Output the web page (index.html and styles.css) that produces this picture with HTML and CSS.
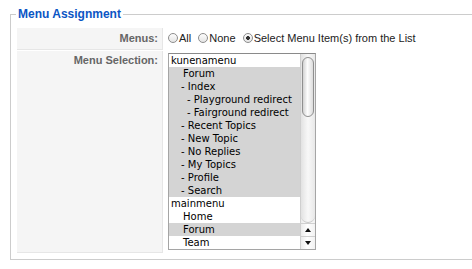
FILE: index.html
```html
<!DOCTYPE html>
<html lang="en">
<head>
    <meta charset="UTF-8">
    <title>Menu Assignment</title>
    <link rel="stylesheet" href="styles.css">
</head>
<body>

    <fieldset class="adminform">
        <legend>Menu Assignment</legend>

        <table class="admintable">
            <tr>
                <td class="key">Menus:</td>
                <td class="field">
                    <label class="choice"><input type="radio" name="menus" value="all"><span>All</span></label>
                    <label class="choice"><input type="radio" name="menus" value="none"><span>None</span></label>
                    <label class="choice"><input type="radio" name="menus" value="select" checked><span>Select Menu Item(s) from the List</span></label>
                </td>
            </tr>
            <tr>
                <td class="key key--top">Menu Selection:</td>
                <td class="field field--top">
                    <div class="menu-select">
                        <ul class="menu-select__list">
                            <li>kunenamenu</li>
                            <li class="lvl1 selected">Forum</li>
                            <li class="lvl2 selected">- Index</li>
                            <li class="lvl3 selected">- Playground redirect</li>
                            <li class="lvl3 selected">- Fairground redirect</li>
                            <li class="lvl2 selected">- Recent Topics</li>
                            <li class="lvl2 selected">- New Topic</li>
                            <li class="lvl2 selected">- No Replies</li>
                            <li class="lvl2 selected">- My Topics</li>
                            <li class="lvl2 selected">- Profile</li>
                            <li class="lvl2 selected">- Search</li>
                            <li>mainmenu</li>
                            <li class="lvl1">Home</li>
                            <li class="lvl1 selected">Forum</li>
                            <li class="lvl1">Team</li>
                        </ul>
                        <div class="scrollbar">
                            <div class="scrollbar__track">
                                <div class="scrollbar__thumb"></div>
                            </div>
                            <div class="scrollbar__arrow scrollbar__arrow--up"></div>
                            <div class="scrollbar__arrow scrollbar__arrow--down"></div>
                        </div>
                    </div>
                </td>
            </tr>
        </table>
    </fieldset>

</body>
</html>
```

FILE: styles.css
```css
* {
    box-sizing: border-box;
}

body {
    margin: 0;
    padding: 7px 0 0 10px;
    font-family: "Liberation Sans", Arial, sans-serif;
    font-size: 11px;
    color: #222;
    background: #fff;
    overflow: hidden;
}

/* the fieldset runs on past the right edge of the shot, so no right border */
.adminform {
    margin: 0;
    padding: 0 5px 5px 5px;
    border: 1px solid #ccc;
    border-right: none;
}

.adminform legend {
    padding: 0 2px;
    color: #0b55c4;
    font-size: 12px;
    font-weight: bold;
    line-height: 14px;
}

.admintable {
    margin-top: 6px;
    border-spacing: 1px;
}

.admintable td {
    padding: 0;
    line-height: 13px;
}

.key {
    width: 146px;
    height: 22px;
    padding-right: 4px !important;
    background: #f5f5f5;
    border-bottom: 1px solid #e6e6e6;
    border-right: 1px solid #e6e6e6;
    text-align: right;
    font-weight: bold;
    color: #666;
    vertical-align: middle;
}

.key--top {
    vertical-align: top;
    padding-top: 3px !important;
}

.field {
    padding: 0 4px !important;
    vertical-align: middle;
}

.field--top {
    padding: 2px 4px 3px !important;
    vertical-align: top;
}

/* radio choices */
.choice {
    display: inline-flex;
    align-items: center;
    margin-right: 4px;
}

.choice input {
    appearance: none;
    -webkit-appearance: none;
    width: 10px;
    height: 10px;
    margin: 0 1px 0 0;
    border: 1px solid #8d8d8d;
    border-radius: 50%;
    background: linear-gradient(#fdfdfd, #e4e4e4);
}

.choice input:checked {
    background: radial-gradient(circle, #333 0 1.6px, transparent 2.2px), linear-gradient(#fdfdfd, #e4e4e4);
}

/* multi select */
.menu-select {
    display: flex;
    width: 148px;
    border: 1px solid #a5a5a5;
    border-top-color: #8a8a8a;
    background: #fff;
}

.menu-select__list {
    flex: 1;
    margin: 0;
    padding: 0;
    list-style: none;
    font-family: "DejaVu Sans", sans-serif;
    font-size: 10px;
    line-height: 13px;
    color: #000;
}

.menu-select__list li {
    height: 13px;
    padding-left: 2px;
    white-space: nowrap;
}

.menu-select__list .lvl1 {
    padding-left: 14px;
}

.menu-select__list .lvl2 {
    padding-left: 12px;
}

.menu-select__list .lvl3 {
    padding-left: 18px;
}

.menu-select__list .selected {
    background: #d4d4d4;
}

.scrollbar {
    display: flex;
    flex-direction: column;
    width: 15px;
    border-left: 1px solid #cfcfcf;
    background: linear-gradient(to right, #ececec, #fff 45%, #f2f2f2);
}

.scrollbar__track {
    flex: 1;
    padding: 3px 1px 0 1px;
    border-radius: 0 0 7px 7px;
    border-bottom: 1px solid #c8c8c8;
    background: linear-gradient(to right, #e2e2e2, #f8f8f8 50%, #e8e8e8);
}

.scrollbar__thumb {
    height: 60px;
    border: 1px solid #8f8f8f;
    border-radius: 6px;
    background: linear-gradient(to right, #d2d2d2, #fdfdfd 45%, #dcdcdc);
}

.scrollbar__arrow {
    position: relative;
    height: 13px;
    border-top: 1px solid #d0d0d0;
}

.scrollbar__arrow::after {
    content: "";
    position: absolute;
    left: 4px;
    top: 4px;
    border-left: 3px solid transparent;
    border-right: 3px solid transparent;
}

.scrollbar__arrow--up::after {
    border-bottom: 4px solid #111;
}

.scrollbar__arrow--down::after {
    border-top: 4px solid #111;
}
```
